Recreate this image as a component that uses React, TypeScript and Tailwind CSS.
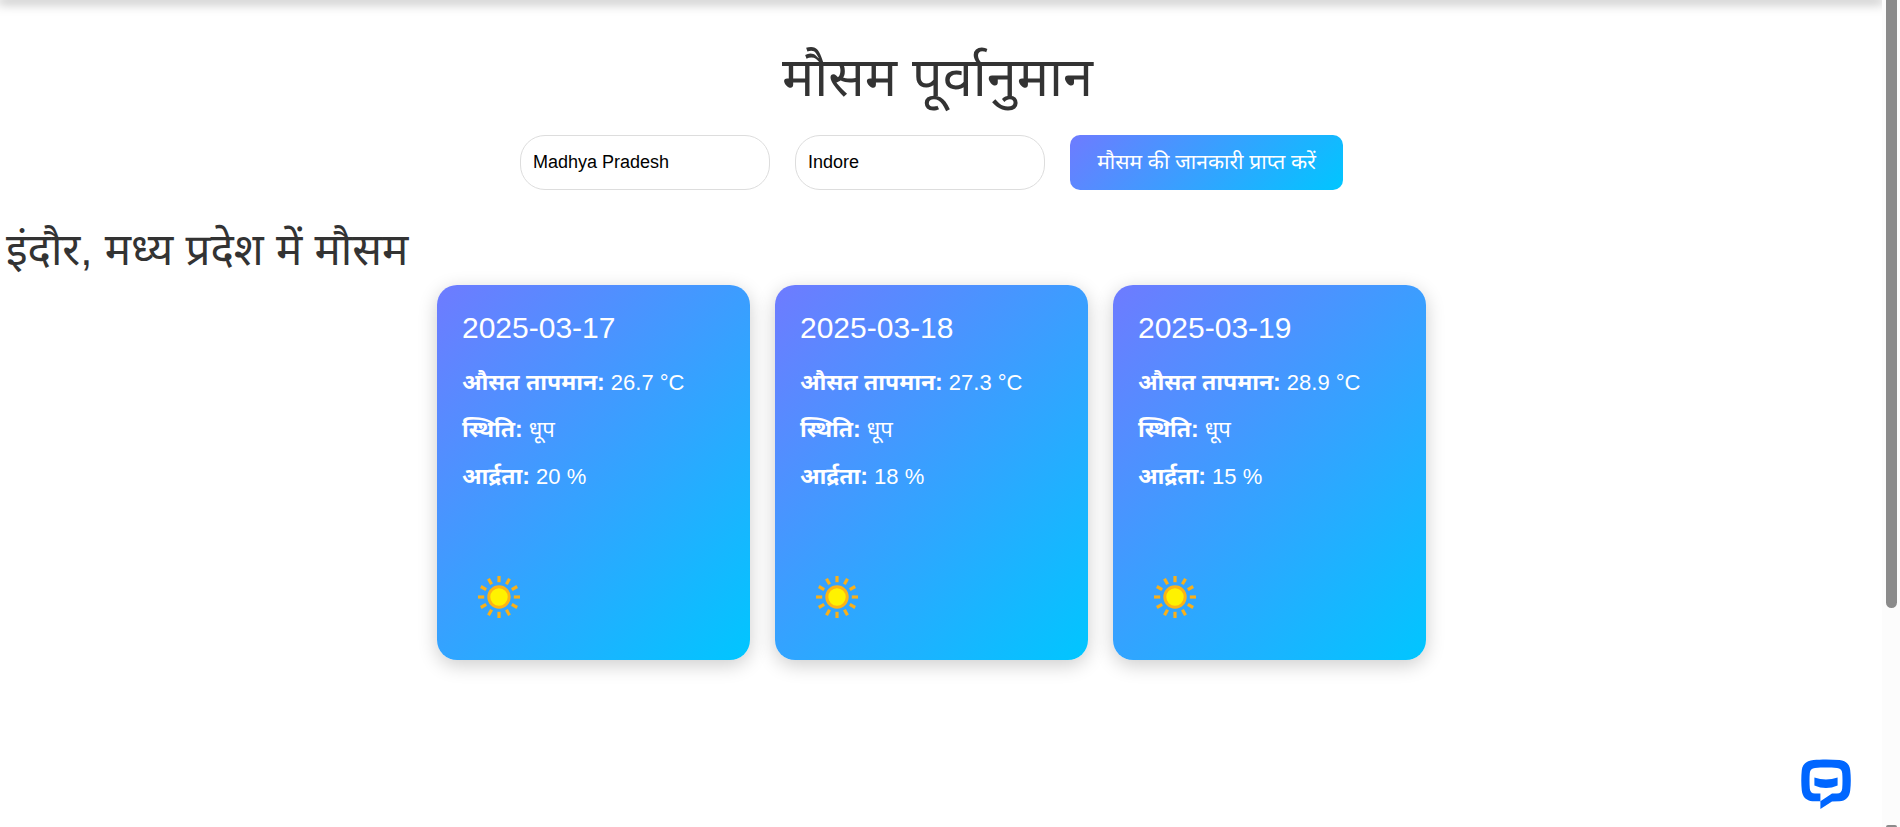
import React, { useState } from "react";

type Forecast = { date: string; temp: string; condition: string; humidity: string };

const forecasts: Forecast[] = [
  { date: "2025-03-17", temp: "26.7 °C", condition: "धूप", humidity: "20 %" },
  { date: "2025-03-18", temp: "27.3 °C", condition: "धूप", humidity: "18 %" },
  { date: "2025-03-19", temp: "28.9 °C", condition: "धूप", humidity: "15 %" },
];

const rayAngles = [0, 30, 60, 90, 120, 150, 180, 210, 240, 270, 300, 330];

function SunIcon() {
  return (
    <svg viewBox="0 0 80 80" className="size-20" role="img" aria-label="धूप">
      {rayAngles.map((angle) => (
        <rect key={angle} x="38.4" y="19" width="3.2" height="6.2" fill="#f9b01a" transform={`rotate(${angle} 40 40)`} />
      ))}
      <circle cx="40" cy="40" r="10.2" fill="#fff200" stroke="#fcb316" strokeWidth="3" />
    </svg>
  );
}

function WeatherCard({ date, temp, condition, humidity }: Forecast) {
  return (
    <article className="flex h-[375px] w-[313px] flex-col rounded-[20px] bg-[linear-gradient(135deg,#6e7bff,#00c6ff)] px-[25px] pt-[25px] pb-[23px] text-white shadow-[0_5px_19px_rgba(0,0,0,0.2)]">
      <h3 className="text-[30px] leading-[36px]">{date}</h3>
      <div className="mt-[13px] text-[22px] leading-[47px]">
        <p><strong className="text-[23px]">औसत तापमान:</strong> {temp}</p>
        <p><strong className="text-[23px]">स्थिति:</strong> {condition}</p>
        <p><strong className="text-[23px]">आर्द्रता:</strong> {humidity}</p>
      </div>
      <div className="mt-auto -ml-[3px]">
        <SunIcon />
      </div>
    </article>
  );
}

function ChatIcon() {
  return (
    <svg viewBox="0 0 50 50" className="size-[50px]" aria-hidden="true">
      <path
        fill="#0066ff"
        fillRule="evenodd"
        d="M12.5 1 C20 .2 30 .2 38.5 1 C44.5 1.6 48.6 5 49.2 11 C50 18 50 25 49.2 31.5 C48.5 38 44.5 42 38.5 42.3 L31 42.5 L19.4 50 V42.3 H11.5 C5.5 41.8 1.4 38 .8 31.5 C.1 25 .1 18 .8 11 C1.4 5 6 1.5 12.5 1 Z M14 9 C10.8 9.3 9 11 8.8 14 C8.4 19 8.4 24 8.8 29.5 C9 32.5 10.7 34.5 14 34.6 H19.4 V42.3 L31 34.6 H36 C39.3 34.5 41 32.5 41.2 29.5 C41.6 24 41.6 19 41.2 14 C41 11 39.2 9.3 36 9 C29 8.4 21 8.4 14 9 Z"
      />
      <path fill="#0066ff" d="M13.4 18.5 Q25 22.5 36.6 18.5 V26.5 Q25 31.5 13.4 26.5 Z" />
    </svg>
  );
}

export default function App() {
  const [region, setRegion] = useState("Madhya Pradesh");
  const [city, setCity] = useState("Indore");
  const field =
    "h-[55px] w-[250px] rounded-[25px] border border-[#dddddd] bg-white px-3 text-[18px] text-black outline-none";

  return (
    <div className="flex h-screen overflow-hidden bg-white font-['Liberation_Sans','Noto_Sans_Devanagari','Noto_Sans',sans-serif] text-[#333333]">
      <div className="relative flex-1 overflow-hidden">
        <div className="h-0 shadow-[0_0_12px_2px_rgba(0,0,0,0.5)]" />
        <main className="pr-[13px] pl-[6px]">
          <h1 className="pt-[39px] text-center text-[54px] leading-[76px]">मौसम पूर्वानुमान</h1>
          <form className="mt-5 flex justify-center gap-[25px] pr-3" onSubmit={(e) => e.preventDefault()}>
            <input aria-label="राज्य" className={field} value={region} onChange={(e) => setRegion(e.target.value)} />
            <input aria-label="शहर" className={field} value={city} onChange={(e) => setCity(e.target.value)} />
            <button
              type="submit"
              className="h-[55px] w-[273px] rounded-[10px] bg-[linear-gradient(135deg,#6e7bff,#00c6ff)] pb-[2px] text-[21px] whitespace-nowrap text-white"
            >
              मौसम की जानकारी प्राप्त करें
            </button>
          </form>
          <h2 className="mt-[30px] text-[44px] leading-[60px]">इंदौर, मध्य प्रदेश में मौसम</h2>
          <section className="mt-[5px] flex justify-center gap-[25px] pr-3">
            {forecasts.map((f) => (
              <WeatherCard key={f.date} {...f} />
            ))}
          </section>
        </main>
        <button type="button" aria-label="चैट" className="absolute right-[31px] bottom-[18px]">
          <ChatIcon />
        </button>
      </div>
      <div className="flex w-[18px] flex-col items-center justify-between overflow-hidden bg-[#fcfcfc]" aria-hidden="true">
        <div className="h-[608px] w-[11px] rounded-b-full bg-[#8b8b8b]" />
        <div className="h-[2px] w-[11px] rounded-t-sm bg-[#8b8b8b]" />
      </div>
    </div>
  );
}
